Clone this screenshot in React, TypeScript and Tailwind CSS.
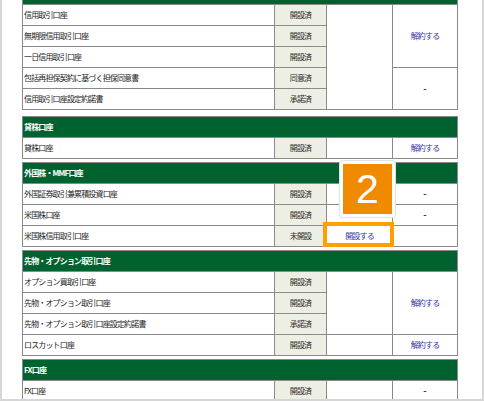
import React from "react";

const ROW_START: Record<number, string> = {
  2: "row-start-2",
  3: "row-start-3",
  4: "row-start-4",
  5: "row-start-5",
  6: "row-start-6",
};
const ROW_SPAN: Record<number, string> = {
  1: "row-span-1",
  2: "row-span-2",
  3: "row-span-3",
  4: "row-span-4",
  5: "row-span-5",
};
const COL_START: Record<number, string> = {
  3: "col-start-3",
  4: "col-start-4",
};

type Extra = { col: 3 | 4; row: number; span: number; content?: React.ReactNode };

const Link = ({ children }: { children: React.ReactNode }) => (
  <span className="text-[#3434a4]">{children}</span>
);

const Dash = () => (
  <span className="text-[#222] font-['Liberation_Sans',sans-serif] text-[10px] tracking-normal">-</span>
);

function AccTable({
  title,
  rows,
  extras,
  className = "",
}: {
  title: string;
  rows: [string, string][];
  extras: Extra[];
  className?: string;
}) {
  return (
    <div
      className={`grid grid-cols-[251px_51px_65px_64px] auto-rows-[20px] gap-px bg-[#8a8a8a] p-px w-[436px] ${className}`}
    >
      <div className="col-span-4 row-start-1 col-start-1 bg-[#00622f] text-white font-bold flex items-center pl-[1px]">
        {title}
      </div>
      {rows.map(([name, status], i) => (
        <React.Fragment key={i}>
          <div className={`col-start-1 ${ROW_START[i + 2]} bg-white text-[#1e1e1e] flex items-center pl-[1px]`}>
            {name}
          </div>
          <div className={`col-start-2 ${ROW_START[i + 2]} bg-[#eeefe4] text-[#2a2a2a] flex items-center justify-center`}>
            {status}
          </div>
        </React.Fragment>
      ))}
      {extras.map((e, i) => (
        <div
          key={"e" + i}
          className={`${COL_START[e.col]} ${ROW_START[e.row + 1]} ${ROW_SPAN[e.span]} bg-white flex items-center justify-center`}
        >
          {e.content}
        </div>
      ))}
    </div>
  );
}

export default function App() {
  return (
    <div className="relative w-[484px] h-[401px] overflow-hidden bg-white border-l-2 border-r-2 border-b-2 border-[#d6d6d6] font-['Noto_Sans_CJK_JP',sans-serif] text-[8px] tracking-[-0.85px] leading-none">
      <div className="flex flex-col pl-[20px]">
        <AccTable
          className="-mt-[17px]"
          title=""
          rows={[
            ["信用取引口座", "開設済"],
            ["無期限信用取引口座", "開設済"],
            ["一日信用取引口座", "開設済"],
            ["包括再担保契約に基づく担保同意書", "同意済"],
            ["信用取引口座設定約諾書", "承諾済"],
          ]}
          extras={[
            { col: 3, row: 1, span: 5 },
            { col: 4, row: 1, span: 3, content: <Link>解約する</Link> },
            { col: 4, row: 4, span: 2, content: <Dash /> },
          ]}
        />
        <AccTable
          className="mt-[6px]"
          title="貸株口座"
          rows={[["貸株口座", "開設済"]]}
          extras={[
            { col: 3, row: 1, span: 1 },
            { col: 4, row: 1, span: 1, content: <Link>解約する</Link> },
          ]}
        />
        <AccTable
          className="mt-[3px]"
          title="外国株・MMF口座"
          rows={[
            ["外国証券取引兼累積投資口座", "開設済"],
            ["米国株口座", "開設済"],
            ["米国株信用取引口座", "未開設"],
          ]}
          extras={[
            { col: 3, row: 1, span: 1 },
            { col: 4, row: 1, span: 1, content: <Dash /> },
            { col: 3, row: 2, span: 1 },
            { col: 4, row: 2, span: 1, content: <Dash /> },
            { col: 3, row: 3, span: 1, content: <Link>開設する</Link> },
            { col: 4, row: 3, span: 1 },
          ]}
        />
        <AccTable
          className="mt-[3px]"
          title="先物・オプション取引口座"
          rows={[
            ["オプション買取引口座", "開設済"],
            ["先物・オプション取引口座", "開設済"],
            ["先物・オプション取引口座設定約諾書", "承諾済"],
            ["ロスカット口座", "開設済"],
          ]}
          extras={[
            { col: 3, row: 1, span: 3 },
            { col: 4, row: 1, span: 3, content: <Link>解約する</Link> },
            { col: 3, row: 4, span: 1 },
            { col: 4, row: 4, span: 1, content: <Link>解約する</Link> },
          ]}
        />
        <AccTable
          className="mt-[3px]"
          title="FX口座"
          rows={[["FX口座", "開設済"]]}
          extras={[
            { col: 3, row: 1, span: 1 },
            { col: 4, row: 1, span: 1, content: <Dash /> },
          ]}
        />
      </div>

      {/* badge */}
      <div className="absolute left-[338px] top-[161px] w-[55px] h-[56px] border-[3px] border-white rounded-[3px] bg-[#f08b00] shadow-[0_0_0_1px_#e2e2e2] flex items-center justify-center">
        <span className="text-white text-[41px] leading-none tracking-normal font-['Liberation_Sans',sans-serif]">2</span>
      </div>
      {/* highlight box */}
      <div className="absolute left-[321px] top-[222px] w-[71px] h-[25px] border-4 border-[#ffa000]" />
    </div>
  );
}
